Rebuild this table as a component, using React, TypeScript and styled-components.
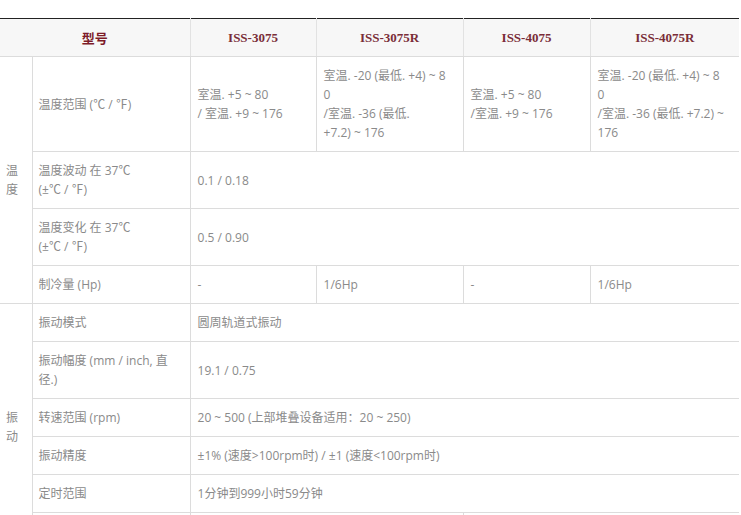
import React from "react";
import styled, { createGlobalStyle } from "styled-components";

const Global = createGlobalStyle`
  html, body { margin: 0; padding: 0; background: #fff; }
  body { font-family: "Open Sans", "Noto Sans CJK SC", sans-serif; }
`;

const Page = styled.div`
  padding-top: 18px;
  width: 741px;
`;

const Table = styled.table`
  width: 739px;
  border-collapse: collapse;
  table-layout: fixed;
  border-top: 1px solid #222;
  font-family: "Open Sans", "Noto Sans CJK SC", sans-serif;
  font-size: 12px;
  line-height: 19px;
  color: #8a8a8a;
`;

const HeadCell = styled.th<{ $main?: boolean }>`
  background: #f7f7f7;
  border-bottom: 1px solid #dcdcdc;
  border-left: ${(p) => (p.$main ? "none" : "1px solid #e2e2e2")};
  padding: 9px 4px;
  text-align: center;
  font-family: ${(p) =>
    p.$main
      ? `"Noto Sans CJK SC", sans-serif`
      : `"Liberation Serif", "DejaVu Serif", serif`};
  font-size: 13px;
  font-weight: 700;
  color: ${(p) => (p.$main ? "#7d1b28" : "#7a2d38")};
  line-height: 19px;
`;

const GroupCell = styled.td`
  padding: 0 7px 0 6px;
  border-bottom: 1px solid #dcdcdc;
  vertical-align: middle;
  text-align: left;
`;

const LabelCell = styled.td`
  padding: 9px 6px;
  border-left: 1px solid #dcdcdc;
  border-bottom: 1px solid #dcdcdc;
  vertical-align: middle;
`;

const ValueCell = styled.td`
  padding: 9px 7px;
  border-left: 1px solid #dcdcdc;
  border-bottom: 1px solid #dcdcdc;
  vertical-align: middle;
  white-space: nowrap;
`;

const Lines: React.FC<{ lines: string[] }> = ({ lines }) => (
  <>
    {lines.map((l, i) => (
      <React.Fragment key={i}>
        {i > 0 && <br />}
        {l}
      </React.Fragment>
    ))}
  </>
);

export default function App() {
  return (
    <Page>
      <Global />
      <Table>
        <colgroup>
          <col style={{ width: 32 }} />
          <col style={{ width: 158 }} />
          <col style={{ width: 126 }} />
          <col style={{ width: 147 }} />
          <col style={{ width: 127 }} />
          <col style={{ width: 149 }} />
        </colgroup>
        <thead>
          <tr>
            <HeadCell $main colSpan={2}>型号</HeadCell>
            <HeadCell>ISS-3075</HeadCell>
            <HeadCell>ISS-3075R</HeadCell>
            <HeadCell>ISS-4075</HeadCell>
            <HeadCell>ISS-4075R</HeadCell>
          </tr>
        </thead>
        <tbody>
          <tr>
            <GroupCell rowSpan={4}>温度</GroupCell>
            <LabelCell>温度范围 (℃ / ℉)</LabelCell>
            <ValueCell>
              <Lines lines={["室温. +5 ~ 80", "/ 室温. +9 ~ 176"]} />
            </ValueCell>
            <ValueCell>
              <Lines
                lines={["室温. -20 (最低. +4) ~ 8", "0", "/室温. -36 (最低.", "+7.2) ~ 176"]}
              />
            </ValueCell>
            <ValueCell>
              <Lines lines={["室温. +5 ~ 80", "/室温. +9 ~ 176"]} />
            </ValueCell>
            <ValueCell>
              <Lines
                lines={["室温. -20 (最低. +4) ~ 8", "0", "/室温. -36 (最低. +7.2) ~", "176"]}
              />
            </ValueCell>
          </tr>
          <tr>
            <LabelCell>
              <Lines lines={["温度波动 在 37℃", "(±℃ / ℉)"]} />
            </LabelCell>
            <ValueCell colSpan={4}>0.1 / 0.18</ValueCell>
          </tr>
          <tr>
            <LabelCell>
              <Lines lines={["温度变化 在 37℃", "(±℃ / ℉)"]} />
            </LabelCell>
            <ValueCell colSpan={4}>0.5 / 0.90</ValueCell>
          </tr>
          <tr>
            <LabelCell>制冷量 (Hp)</LabelCell>
            <ValueCell>-</ValueCell>
            <ValueCell>1/6Hp</ValueCell>
            <ValueCell>-</ValueCell>
            <ValueCell>1/6Hp</ValueCell>
          </tr>
          <tr>
            <GroupCell rowSpan={6}>振动</GroupCell>
            <LabelCell>振动模式</LabelCell>
            <ValueCell colSpan={4}>圆周轨道式振动</ValueCell>
          </tr>
          <tr>
            <LabelCell>
              <Lines lines={["振动幅度 (mm / inch, 直", "径.)"]} />
            </LabelCell>
            <ValueCell colSpan={4}>19.1 / 0.75</ValueCell>
          </tr>
          <tr>
            <LabelCell>转速范围 (rpm)</LabelCell>
            <ValueCell colSpan={4}>20 ~ 500 (上部堆叠设备适用：20 ~ 250)</ValueCell>
          </tr>
          <tr>
            <LabelCell>振动精度</LabelCell>
            <ValueCell colSpan={4}>±1% (速度&gt;100rpm时) / ±1 (速度&lt;100rpm时)</ValueCell>
          </tr>
          <tr>
            <LabelCell>定时范围</LabelCell>
            <ValueCell colSpan={4}>1分钟到999小时59分钟</ValueCell>
          </tr>
          <tr>
            <LabelCell>{"\u00a0"}</LabelCell>
            <ValueCell colSpan={2}>{"\u00a0"}</ValueCell>
            <ValueCell colSpan={2}>{"\u00a0"}</ValueCell>
          </tr>
        </tbody>
      </Table>
    </Page>
  );
}
